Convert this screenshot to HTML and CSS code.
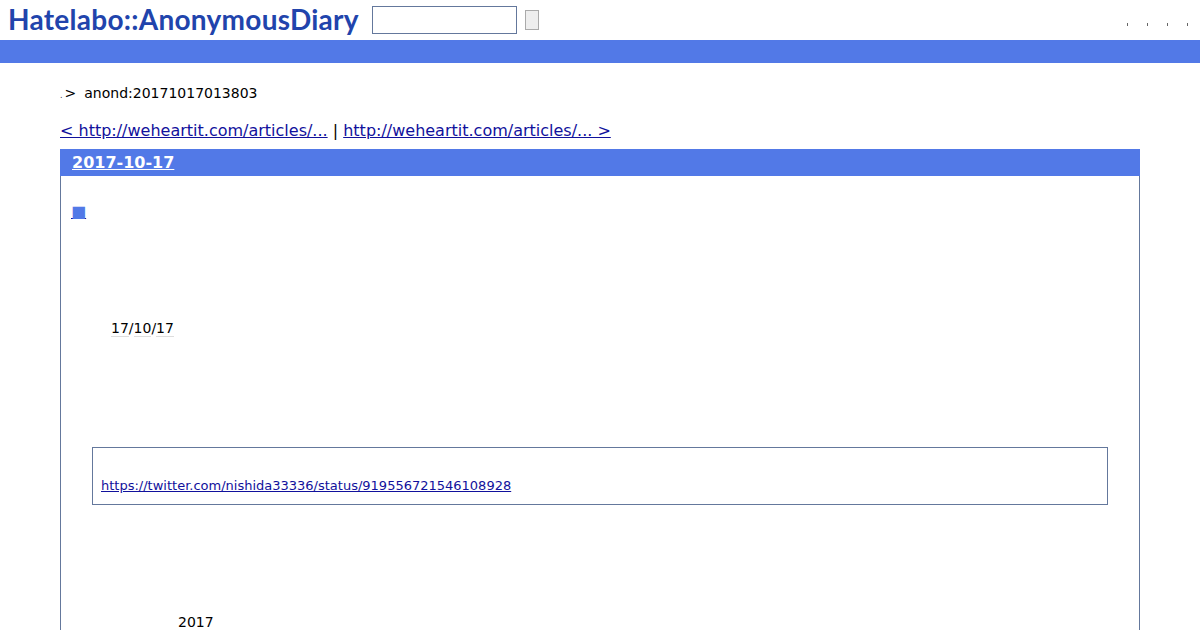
FILE: index.html
```html
<!DOCTYPE html>
<html lang="en">
<head>
    <meta charset="UTF-8">
    <meta name="viewport" content="width=device-width, initial-scale=1.0">
    <title>anond:20171017013803</title>
    <link rel="stylesheet" href="styles.css">
</head>
<body>
    <div class="header">
        <a class="logo" href="#">Hatelabo::AnonymousDiary</a>
        <form class="search">
            <input class="search-text" type="text">
            <button class="search-btn" type="button"></button>
        </form>
        <div class="menu">
            <a href="#"></a>
            <a href="#"></a>
            <a href="#"></a>
            <a href="#"></a>
        </div>
    </div>
    <div class="bar"></div>

    <div class="content">
        <p class="crumb"><a href="#">.</a><span class="arrow">&gt;</span><span>anond:20171017013803</span></p>
        <p class="pager"><a href="#">&lt; http://weheartit.com/articles/...</a> | <a href="#">http://weheartit.com/articles/... &gt;</a></p>

        <div class="day">
            <h2 class="day-title"><a href="#">2017-10-17</a></h2>
            <div class="day-body">
                <h3 class="section-title"><a href="#"><span class="mark">■</span></a></h3>
                <p class="date"><span class="dotted">17</span>/<span class="dotted">10</span>/<span class="dotted">17</span></p>
                <blockquote class="quote">
                    <a href="#">https://twitter.com/nishida33336/status/919556721546108928</a>
                </blockquote>
                <p class="year">2017</p>
            </div>
        </div>
    </div>
</body>
</html>
```

FILE: styles.css
```css
html, body {
    height: 630px;
    overflow: hidden;
}

body {
    margin: 0;
    font-family: "DejaVu Sans", sans-serif;
    background-color: white;
    color: black;
}

a {
    color: #11119c;
}

.header {
    display: flex;
    align-items: center;
    height: 40px;
    padding-left: 8px;
}

.logo {
    width: 364px;
    margin-top: -2px;
    font-family: "Lato", sans-serif;
    font-weight: 700;
    font-size: 28px;
    letter-spacing: 0.27px;
    color: #2144ac;
    text-decoration: none;
}

.search {
    display: flex;
    align-items: center;
    gap: 8px;
}

.search-text {
    width: 145px;
    height: 28px;
    padding: 0;
    box-sizing: border-box;
    border: 1px solid #64789c;
    background-color: white;
}

.search-btn {
    width: 14px;
    height: 20px;
    padding: 0;
    border: 1px solid #aaa;
    background-color: #eee;
}

.menu {
    display: flex;
    gap: 19px;
    margin-left: auto;
    margin-right: 12px;
    padding-top: 8px;
}

.menu a {
    display: block;
    width: 1px;
    height: 3px;
    background-color: #666;
}

.bar {
    height: 23px;
    background-color: #5279e7;
}

.content {
    padding: 0 60px;
}

.crumb {
    display: flex;
    align-items: baseline;
    margin: 22px 0 0;
    font-size: 14px;
    line-height: 17px;
}

.crumb a {
    color: #333;
    text-decoration: none;
    font-size: 8px;
}

.arrow {
    margin: 0 8px 0 2px;
}

.pager {
    margin: 17px 0 0;
    font-size: 16px;
    line-height: 19px;
}

.day {
    height: 600px;
    margin-top: 9px;
    border: 1px solid #64789c;
    border-top: none;
}

.day-title {
    height: 27px;
    margin: 0 -1px;
    padding: 0 12px;
    font-size: 16px;
    line-height: 27px;
    background-color: #5279e7;
}

.day-title a {
    color: white;
}

.day-body {
    padding: 0 31px;
}

.section-title {
    margin: 0 0 0 -21px;
    padding-top: 26px;
    font-size: 16px;
    font-weight: normal;
    line-height: 20px;
}

.mark {
    color: #5279e7;
}

.date {
    margin: 96px 0 0 19px;
    font-size: 14px;
    line-height: 20px;
}

.dotted {
    border-bottom: 1px solid #ddd;
}

.quote {
    margin: 109px 0 0;
    padding: 28px 8px 9px;
    border: 1px solid #64789c;
    font-size: 13px;
    line-height: 19px;
}

.year {
    margin: 107px 0 0 86px;
    font-size: 14px;
    line-height: 20px;
}
```
